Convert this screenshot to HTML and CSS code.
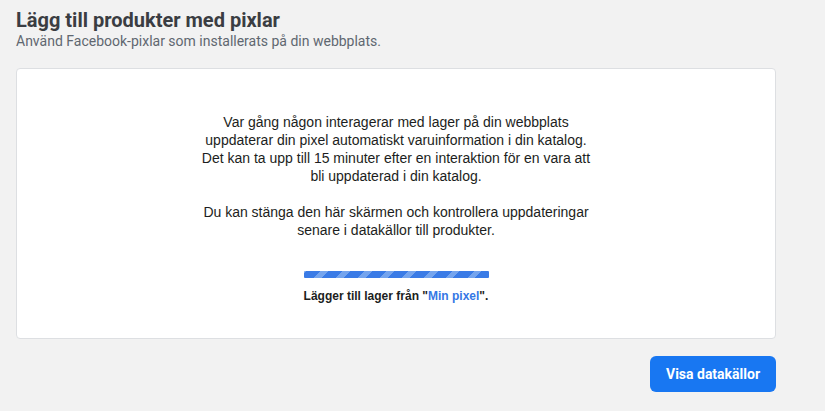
FILE: index.html
```html
<!DOCTYPE html>
<html lang="sv">

<head>
    <meta charset="UTF-8">
    <meta name="viewport" content="width=device-width, initial-scale=1.0">
    <title>Lägg till produkter med pixlar</title>
    <link rel="stylesheet" href="styles.css">
</head>

<body>
    <div class="page">
        <div class="header">
            <h1 class="title">Lägg till produkter med pixlar</h1>
            <p class="subtitle">Använd Facebook-pixlar som installerats på din webbplats.</p>
        </div>
        <div class="card">
            <p class="info">
                Var gång någon interagerar med lager på din webbplats<br>
                uppdaterar din pixel automatiskt varuinformation i din katalog.<br>
                Det kan ta upp till 15 minuter efter en interaktion för en vara att<br>
                bli uppdaterad i din katalog.
            </p>
            <p class="info">
                Du kan stänga den här skärmen och kontrollera uppdateringar<br>
                senare i datakällor till produkter.
            </p>
            <div class="progress"></div>
            <p class="status">Lägger till lager från "<span class="pixel">Min pixel</span>".</p>
        </div>
        <div class="footer">
            <button class="btn-primary">Visa datakällor</button>
        </div>
    </div>
</body>

</html>
```

FILE: styles.css
```css
* {
    margin: 0;
    padding: 0;
    box-sizing: border-box;
}

body {
    background-color: #f2f2f2;
    font-family: Roboto, "Liberation Sans", Arial, sans-serif;
}

.page {
    padding: 8px 49px 0 16px;
}

.title {
    font-size: 20px;
    font-weight: bold;
    line-height: 24px;
    color: #3a3d42;
}

.subtitle {
    font-size: 14px;
    line-height: 18px;
    color: #606770;
}

.card {
    margin-top: 18px;
    background-color: #fff;
    border: 1px solid #dddfe2;
    border-radius: 4px;
    padding: 44px 0 34px;
    display: flex;
    flex-direction: column;
    align-items: center;
}

.info {
    font-family: "Liberation Sans", Arial, sans-serif;
    font-size: 14px;
    line-height: 18px;
    color: #1c1e21;
    text-align: center;
}

.info + .info {
    margin-top: 18px;
}

.progress {
    width: 185px;
    height: 7px;
    margin-top: 32px;
    border-radius: 1px;
    background: repeating-linear-gradient(-45deg, #3a7be6 0, #3a7be6 10px, #74a4ee 10px, #74a4ee 15.5px);
}

.status {
    margin-top: 10px;
    font-family: "Liberation Sans", Arial, sans-serif;
    font-size: 12px;
    font-weight: bold;
    line-height: 16px;
    color: #1c1e21;
}

.pixel {
    color: #3578e5;
}

.footer {
    display: flex;
    justify-content: flex-end;
    margin-top: 17px;
}

.btn-primary {
    width: 126px;
    height: 36px;
    border: none;
    border-radius: 6px;
    background-color: #1877f2;
    color: #fff;
    font-family: Roboto, "Liberation Sans", Arial, sans-serif;
    font-size: 14px;
    font-weight: bold;
}
```
